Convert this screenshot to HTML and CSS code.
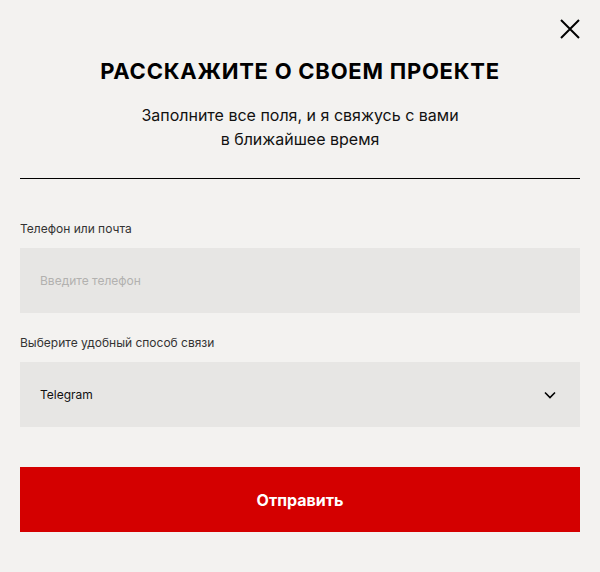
FILE: index.html
```html
<!DOCTYPE html>
<html lang="ru">
<head>
<meta charset="utf-8">
<link rel="stylesheet" href="styles.css">
</head>
<body>
<div class="modal">
  <button class="close" aria-label="Закрыть">
    <svg width="20" height="20" viewBox="0 0 20 20"><path d="M1 1L19 19M19 1L1 19" stroke="#000" stroke-width="2" fill="none"/></svg>
  </button>
  <h1 class="title">РАССКАЖИТЕ О СВОЕМ ПРОЕКТЕ</h1>
  <p class="subtitle">Заполните все поля, и я свяжусь с вами<br>в ближайшее время</p>
  <div class="divider"></div>
  <form class="form">
    <label class="field">
      <span class="label">Телефон или почта</span>
      <input class="input" type="text" placeholder="Введите телефон">
    </label>
    <label class="field">
      <span class="label">Выберите удобный способ связи</span>
      <div class="select">
        <span>Telegram</span>
        <svg width="12" height="8" viewBox="0 0 12 8"><path d="M1 1.5L6 6.5L11 1.5" stroke="#000" stroke-width="1.6" fill="none"/></svg>
      </div>
    </label>
    <button class="submit" type="button">Отправить</button>
  </form>
</div>
</body>
</html>
```
FILE: styles.css
```css
html, body { margin: 0; padding: 0; }
body {
  background: #f3f2f0;
  font-family: Inter, "Noto Sans", sans-serif;
  color: #000;
}
.modal {
  position: relative;
  padding: 58px 20px 40px;
}
.close {
  position: absolute;
  top: 19px;
  right: 20px;
  width: 20px;
  height: 20px;
  padding: 0;
  border: 0;
  background: none;
  display: flex;
}
.title {
  margin: 0;
  text-align: center;
  font-size: 22px;
  line-height: 27px;
  font-weight: 700;
  letter-spacing: 0.75px;
}
.subtitle {
  margin: 18px 0 0;
  text-align: center;
  font-size: 16px;
  line-height: 24px;
  color: #111;
}
.divider {
  margin-top: 27px;
  height: 1px;
  background: #000;
}
.form {
  display: flex;
  flex-direction: column;
  margin-top: 42px;
}
.field {
  display: flex;
  flex-direction: column;
  gap: 12px;
  margin-bottom: 22px;
}
.label {
  font-size: 12px;
  line-height: 15px;
  color: #333;
}
.input, .select {
  box-sizing: border-box;
  height: 65px;
  border: 0;
  background: #e7e6e4;
  padding: 0 20px;
  font-family: inherit;
  font-size: 12px;
  color: #111;
  outline: none;
}
.input::placeholder { color: #b2b1af; }
.select {
  display: flex;
  align-items: center;
  justify-content: space-between;
  padding-right: 24px;
}
.submit {
  margin-top: 18px;
  height: 65px;
  border: 0;
  background: #d40000;
  color: #fff;
  font-family: inherit;
  font-size: 16px;
  font-weight: 700;
}
```
